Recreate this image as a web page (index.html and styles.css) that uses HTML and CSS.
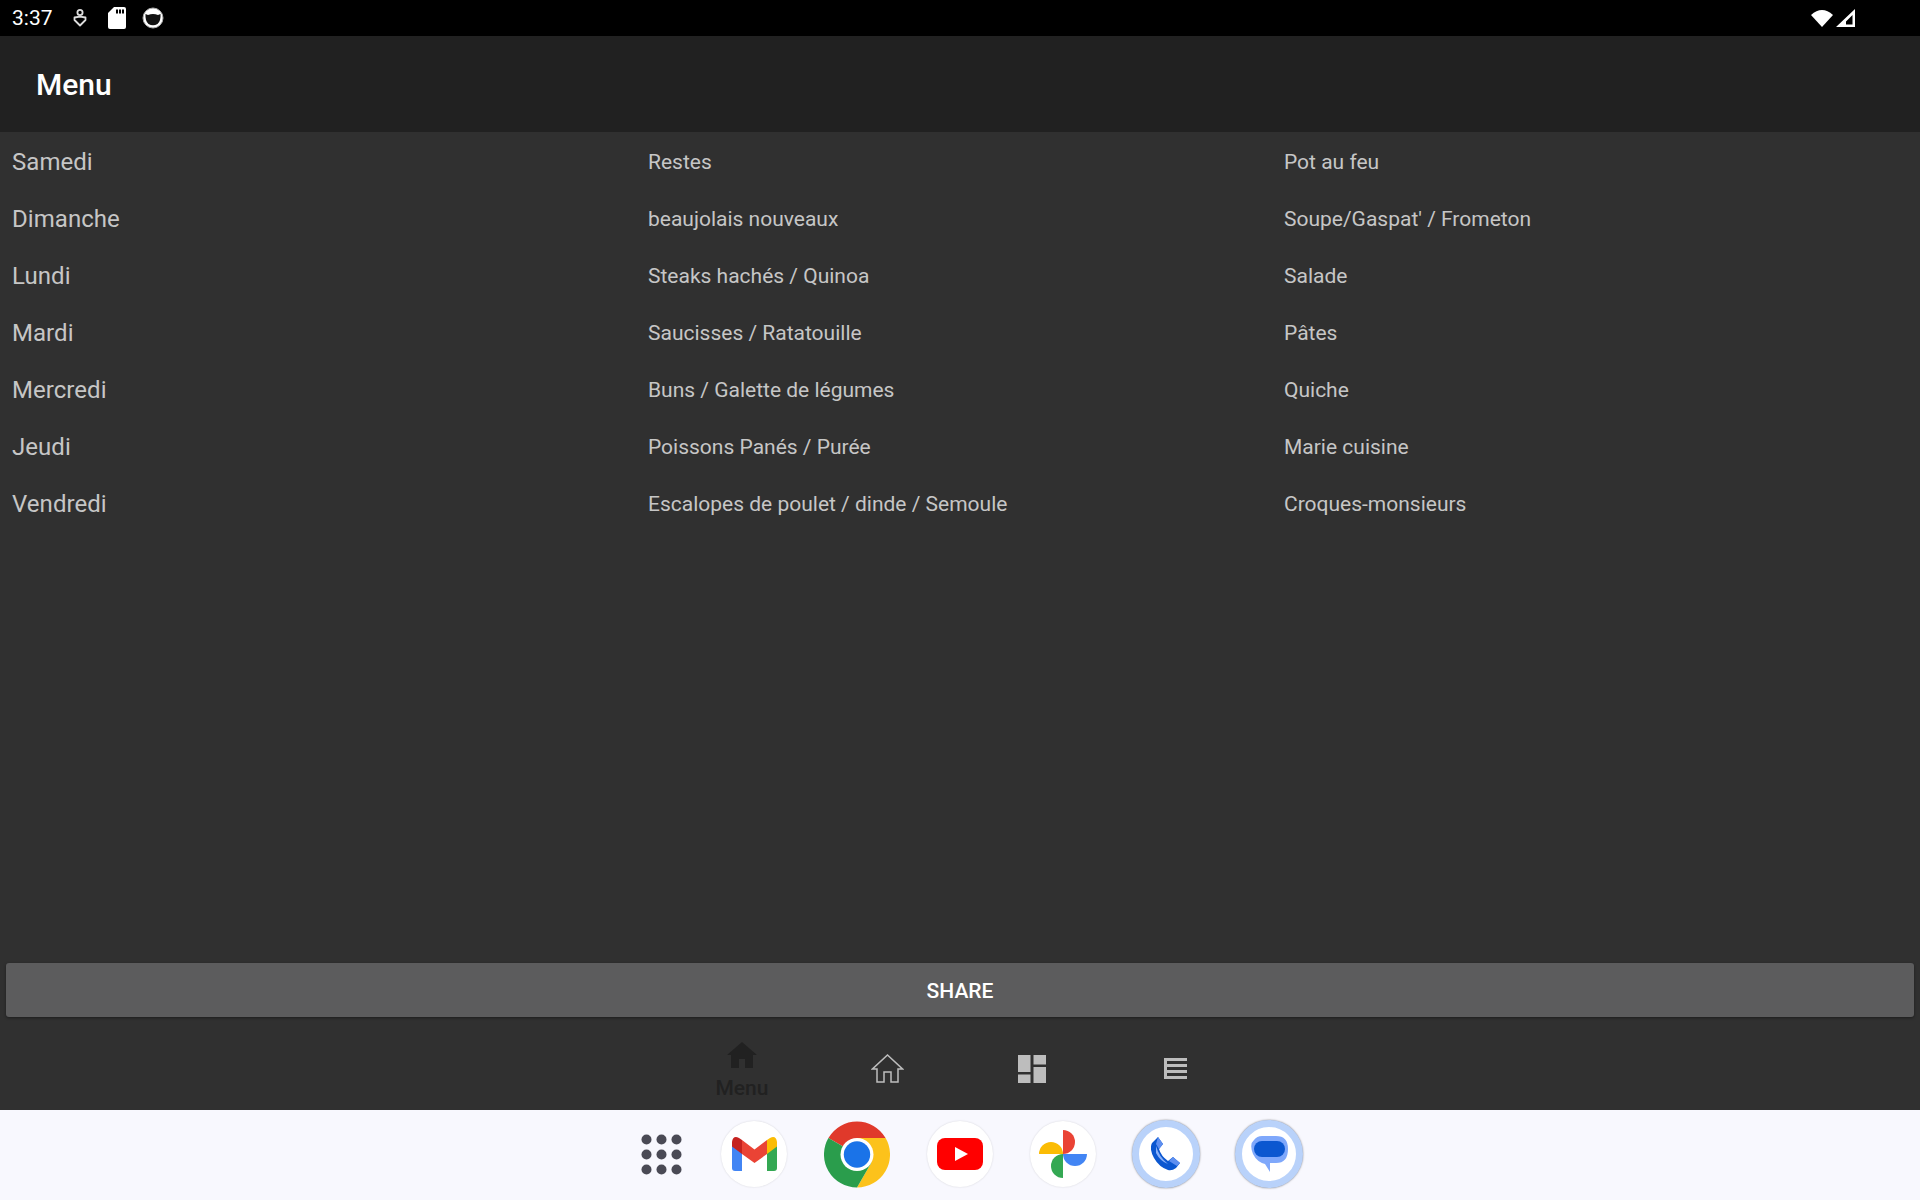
FILE: index.html
```html
<!DOCTYPE html>
<html lang="fr">
<head>
    <meta charset="UTF-8">
    <title>Menu</title>
    <link rel="stylesheet" href="styles.css">
</head>
<body>
    <div class="status-bar">
        <div class="status-left">
            <span class="clock">3:37</span>
            <svg class="st-usb" width="16" height="20" viewBox="0 0 16 20"><circle cx="8" cy="4.5" r="2.6" fill="none" stroke="#ddd" stroke-width="1.8"/><path d="M2.5 9.5 L8 8.6 L13.5 9.5 L13.5 12 L8 17.5 L2.5 12 Z" fill="none" stroke="#ddd" stroke-width="1.8" stroke-linejoin="round"/></svg>
            <svg class="st-sd" width="18" height="22" viewBox="0 0 18 22"><path d="M6 0 H16 Q18 0 18 2 V20 Q18 22 16 22 H2 Q0 22 0 20 V6 Z" fill="#fff"/><path d="M8 2.5 h2 v4 h-2z M11 2.5 h2 v4 h-2z M14 2.5 h2 v4 h-2z" fill="#000"/></svg>
            <svg class="st-cat" width="22" height="22" viewBox="0 0 22 22"><circle cx="11" cy="11" r="10" fill="#fff" stroke="#aaa" stroke-width="1"/><path d="M3.5 7 L6 8 Q11 6 16 8 L18.5 7 Q19 14 15.5 17 Q11 19.5 6.5 17 Q3 14 3.5 7 Z" fill="#111"/></svg>
        </div>
        <div class="status-right">
            <svg width="22" height="17" viewBox="0 0 22 17"><path d="M0 5 Q11 -5 22 5 L11 17 Z" fill="#fff"/></svg>
            <svg width="19" height="18" viewBox="0 0 19 18"><path d="M19 0 V18 H0 Z M16.5 6 L10 12.5 V15.5 H16.5 Z" fill="#fff" fill-rule="evenodd"/></svg>
        </div>
    </div>

    <div class="app-bar">Menu</div>

    <main class="content">
        <div class="menu-grid">
            <div class="day">Samedi</div><div class="meal">Restes</div><div class="meal">Pot au feu</div>
            <div class="day">Dimanche</div><div class="meal">beaujolais nouveaux</div><div class="meal">Soupe/Gaspat' / Frometon</div>
            <div class="day">Lundi</div><div class="meal">Steaks hachés / Quinoa</div><div class="meal">Salade</div>
            <div class="day">Mardi</div><div class="meal">Saucisses / Ratatouille</div><div class="meal">Pâtes</div>
            <div class="day">Mercredi</div><div class="meal">Buns / Galette de légumes</div><div class="meal">Quiche</div>
            <div class="day">Jeudi</div><div class="meal">Poissons Panés / Purée</div><div class="meal">Marie cuisine</div>
            <div class="day">Vendredi</div><div class="meal">Escalopes de poulet / dinde / Semoule</div><div class="meal">Croques-monsieurs</div>
        </div>
        <button class="share-btn">SHARE</button>
    </main>

    <nav class="bottom-nav">
        <div class="nav-item active">
            <svg width="30" height="26" viewBox="0 0 30 26"><path d="M15 0 L30 13 H26 V26 H18 V17 H12 V26 H4 V13 H0 Z" fill="#212121"/></svg>
            <span>Menu</span>
        </div>
        <div class="nav-item">
            <svg width="33" height="29" viewBox="0 0 33 29"><path d="M16.5 1 L31.5 15 H27 V28 H20 V18 H13 V28 H6 V15 H1.5 Z" fill="none" stroke="#bdbdbd" stroke-width="1.5"/></svg>
        </div>
        <div class="nav-item">
            <svg width="28" height="28" viewBox="0 0 28 28"><path d="M0 0 H12.5 V17 H0 Z M15.5 0 H28 V9.5 H15.5 Z M15.5 12 H28 V28 H15.5 Z M0 19.5 H12.5 V28 H0 Z" fill="#bdbdbd"/></svg>
        </div>
        <div class="nav-item">
            <svg width="23" height="21" viewBox="0 0 23 21"><path d="M0 0 H23 V3 H0 Z M0 6 H23 V9 H0 Z M0 12 H23 V15 H0 Z M0 18 H23 V21 H0 Z M0 0 H3 V21 H0 Z" fill="#bdbdbd"/></svg>
        </div>
    </nav>

    <footer class="dock">
        <div class="dock-item apps">
            <svg width="41" height="41" viewBox="0 0 41 41" fill="#4a4a55"><circle cx="5.5" cy="5.5" r="5"/><circle cx="20.5" cy="5.5" r="5"/><circle cx="35.5" cy="5.5" r="5"/><circle cx="5.5" cy="20.5" r="5"/><circle cx="20.5" cy="20.5" r="5"/><circle cx="35.5" cy="20.5" r="5"/><circle cx="5.5" cy="35.5" r="5"/><circle cx="20.5" cy="35.5" r="5"/><circle cx="35.5" cy="35.5" r="5"/></svg>
        </div>
        <div class="dock-item round">
            <svg width="45" height="34" viewBox="0 0 45 34"><path d="M0 8 L10 16 V34 H3 Q0 34 0 31 Z" fill="#4285f4"/><path d="M45 8 L35 16 V34 H42 Q45 34 45 31 Z" fill="#34a853"/><path d="M10 3 L22.5 12.5 L35 3 V17 L22.5 26 L10 17 Z" fill="#ea4335"/><path d="M0 5 Q1 -2 7 1 L10 3 V17 L0 9.5 Z" fill="#c5221f"/><path d="M45 5 Q44 -2 38 1 L35 3 V17 L45 9.5 Z" fill="#fbbc04"/></svg>
        </div>
        <div class="dock-item">
            <svg width="67" height="67" viewBox="0 0 66 66"><path d="M4.4 16.5 A33 33 0 0 1 61.6 16.5 H33 V33 L18.7 24.75 Z" fill="#e0392b"/><path d="M33 16.5 H61.6 A33 33 0 0 1 33 66 L47.3 41.25 L33 33 Z" fill="#fcc21b"/><path d="M4.4 16.5 L18.7 24.75 L33 33 L47.3 41.25 L33 66 A33 33 0 0 1 4.4 16.5 Z" fill="#2a9d4c"/><circle cx="33" cy="33" r="16.5" fill="#fff"/><circle cx="33" cy="33" r="13.2" fill="#1a73e8"/></svg>
        </div>
        <div class="dock-item round">
            <svg width="46" height="32" viewBox="0 0 46 32"><rect width="46" height="32" rx="8" fill="#f00"/><path d="M18 9 L31 16 L18 23 Z" fill="#fff"/></svg>
        </div>
        <div class="dock-item round">
            <svg width="48" height="48" viewBox="0 0 48 48"><path d="M24 0 A12 12 0 0 1 24 24 Z" fill="#ea4335"/><path d="M48 24 A12 12 0 0 1 24 24 Z" fill="#4285f4"/><path d="M24 48 A12 12 0 0 1 24 24 Z" fill="#34a853"/><path d="M0 24 A12 12 0 0 1 24 24 Z" fill="#fbbc04"/></svg>
        </div>
        <div class="dock-item round ringed">
            <svg width="30" height="34" viewBox="0 0 30 34"><path d="M7 0 L12 7 L8 12 Q10 19 17 24 L22 20 L29 26 L25 31 Q21 34 17 33 Q8 30 3 21 Q-2 12 1 6 Z" fill="#0b57d0"/><path d="M7 0 L12 7 L8 12 L5 7 Z M22 20 L29 26 L26 29 L18 24 Z" fill="#5e8ff0"/><path d="M5 9 Q8 20 17 27 Q9 24 5 16 Z" fill="#8ab0f8"/></svg>
        </div>
        <div class="dock-item round ringed">
            <svg width="37" height="36" viewBox="0 0 37 36"><path d="M11 0 H25 Q37 0 37 13 Q37 27 25 27 H19 V36 L14 28 Q6 26 2 18 Q-2 8 3 4 Q6 0 11 0 Z" fill="#7fa8fb"/><rect x="3" y="5" width="31" height="16" rx="8" fill="#0b57d0"/></svg>
        </div>
    </footer>
</body>
</html>
```

FILE: styles.css
```css
* {
    padding: 0;
    margin: 0;
    box-sizing: border-box;
}
body {
    width: 1920px;
    height: 1200px;
    display: flex;
    flex-direction: column;
    overflow: hidden;
    font-family: Roboto, sans-serif;
    background-color: #303030;
}
.status-bar {
    height: 36px;
    background-color: #000;
    display: flex;
    justify-content: space-between;
    align-items: center;
    padding: 0 65px 0 12px;
}
.status-left {
    display: flex;
    align-items: center;
}
.status-right {
    display: flex;
    align-items: center;
    gap: 3px;
}
.clock {
    color: #fff;
    font-size: 21px;
    width: 60px;
}
.st-usb {
    margin-right: 20px;
}
.st-sd {
    margin-right: 16px;
}
.app-bar {
    height: 96px;
    background-color: #212121;
    color: #fff;
    font-size: 30px;
    font-weight: 500;
    line-height: 98px;
    padding-left: 36px;
}
.content {
    flex: 1;
    display: flex;
    flex-direction: column;
    justify-content: space-between;
    padding: 1px 6px 0;
}
.menu-grid {
    display: grid;
    grid-template-columns: repeat(3, 636px);
    grid-auto-rows: 57px;
    align-items: center;
    padding-left: 6px;
}
.day {
    font-size: 24px;
    letter-spacing: 0.05px;
    color: #c6c6c6;
}
.meal {
    font-size: 21px;
    color: #c6c6c6;
}
.share-btn {
    height: 54px;
    width: 100%;
    padding-top: 2px;
    border: none;
    border-radius: 3px;
    background-color: #5c5c5d;
    color: #fff;
    font-family: Roboto, sans-serif;
    font-size: 21px;
    font-weight: 500;
    box-shadow: 0 1px 3px rgba(0, 0, 0, 0.4);
}
.bottom-nav {
    height: 93px;
    display: grid;
    grid-template-columns: 144px 146px 144px 142px;
    padding-left: 670px;
}
.nav-item {
    display: flex;
    flex-direction: column;
    align-items: center;
    justify-content: center;
    padding-top: 10px;
}
.nav-item.active {
    justify-content: flex-start;
    padding-top: 25px;
    gap: 8px;
    color: #212121;
    font-size: 21px;
    font-weight: 500;
}
.dock {
    height: 90px;
    background-color: #f8f8fe;
    display: flex;
    align-items: center;
    gap: 37px;
    padding-left: 628px;
    padding-bottom: 2px;
}
.dock-item {
    width: 66px;
    height: 66px;
    flex-shrink: 0;
    display: flex;
    align-items: center;
    justify-content: center;
}
.apps {
    margin-right: -10px;
}
.round {
    background-color: #fff;
    border-radius: 50%;
    box-shadow: 0 0 2px rgba(0, 0, 0, 0.15);
}
.ringed {
    width: 68px;
    height: 68px;
    margin: 0 -1px;
    border: 7px solid #b9d2fa;
    box-shadow: 0 0 2px rgba(0, 0, 0, 0.5);
}
```
